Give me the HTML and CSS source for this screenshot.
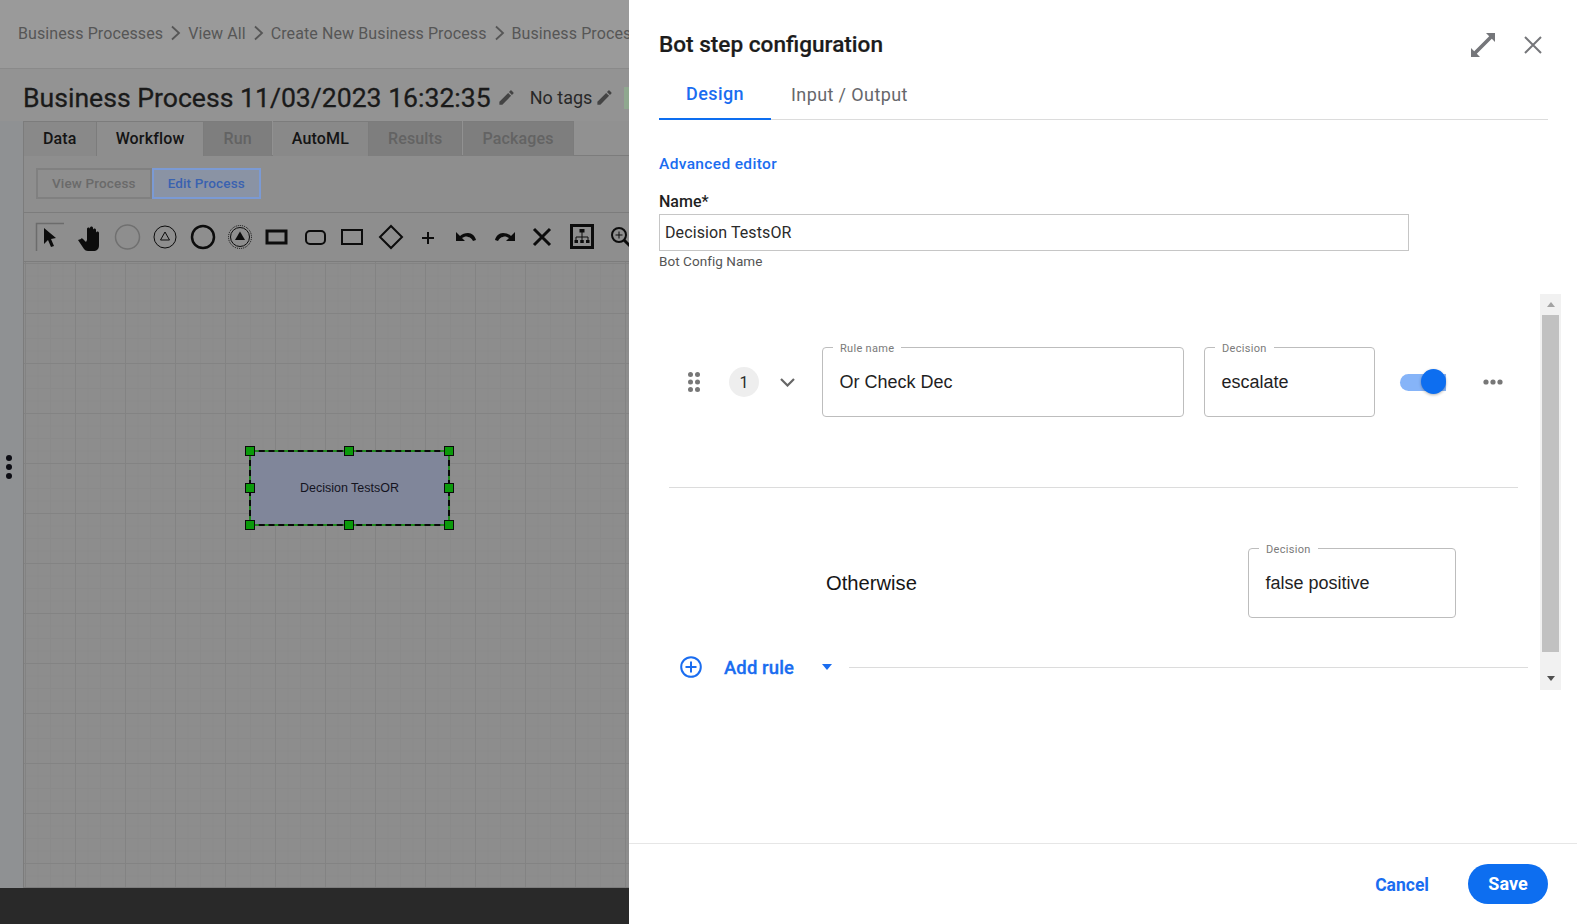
FILE: index.html
```html
<!DOCTYPE html>
<html>
<head>
    <meta charset="utf-8">
    <title>Bot step configuration</title>
    <link rel="stylesheet" href="styles.css">
</head>
<body>
    <div class="page">
        <!-- dimmed page behind the drawer -->
        <section class="backdrop">
            <nav class="crumbs">
                <span>Business Processes</span>
                <svg class="crumb-sep" viewBox="0 0 25 16"><path d="M9 1.500l7 6.500-7 6.500" /></svg>
                <span>View All</span>
                <svg class="crumb-sep" viewBox="0 0 25 16"><path d="M9 1.500l7 6.500-7 6.500" /></svg>
                <span>Create New Business Process</span>
                <svg class="crumb-sep" viewBox="0 0 25 16"><path d="M9 1.500l7 6.500-7 6.500" /></svg>
                <span class="crumb-last">Business Proces</span>
            </nav>
            <div class="process-title">
                <h1>Business Process 11/03/2023 16:32:35</h1>
                <svg class="pencil" viewBox="0 0 24 24"><path d="M3 17.250V21h3.750L17.810 9.940l-3.750-3.750L3 17.250zM20.710 7.040a1 1 0 0 0 0-1.410l-2.340-2.340a1 1 0 0 0-1.410 0l-1.830 1.830 3.750 3.750 1.830-1.830z" /></svg>
                <span class="tags">No tags</span>
                <svg class="pencil tags-pencil" viewBox="0 0 24 24"><path d="M3 17.250V21h3.750L17.810 9.940l-3.750-3.750L3 17.250zM20.710 7.040a1 1 0 0 0 0-1.410l-2.340-2.340a1 1 0 0 0-1.410 0l-1.830 1.830 3.750 3.750 1.830-1.830z" /></svg>
                <span class="status-chip"></span>
            </div>
            <div class="workspace">
                <div class="bg-tabs">
                    <div class="bg-tab">Data</div>
                    <div class="bg-tab current">Workflow</div>
                    <div class="bg-tab off">Run</div>
                    <div class="bg-tab">AutoML</div>
                    <div class="bg-tab off">Results</div>
                    <div class="bg-tab off">Packages</div>
                </div>
                <div class="mode-row">
                    <div class="mode-btn">View Process</div>
                    <div class="mode-btn active">Edit Process</div>
                </div>
                <div class="toolbar">
                    <svg viewBox="0 0 38 38"><path class="select-corner" d="M5.500 33V5.500H33" /><path class="solid" d="M13 10l0 16 4-4 3 7 3-1-3-7 5-1z" /></svg>
                    <svg viewBox="0 0 38 38"><path class="solid" d="M12 21l-3 1 6 9c1 1 2 2 4 2h5c4 0 6-2 6-6V15c0-2-3-2-3 0v-3c0-2-3-2-3 0v-2c0-2-3-2-3 0v1c0-2-3-2-3 0v11l-1 2-3-3c-1-1-2-1-2 0z" /></svg>
                    <svg viewBox="0 0 38 38"><circle class="line-grey" cx="20.500" cy="19" r="12" /></svg>
                    <svg viewBox="0 0 38 38"><circle class="line" cx="20" cy="19" r="11" /><path class="line" d="M20 14l4.500 8h-9z" /></svg>
                    <svg viewBox="0 0 38 38"><circle class="line-25" cx="20" cy="19" r="11" /></svg>
                    <svg viewBox="0 0 38 38"><circle class="line-dbl" cx="19" cy="19" r="11.500" /><circle class="line" cx="19" cy="19" r="9.500" /><path class="solid" d="M19 13.500l5 8.500H14z" /></svg>
                    <svg viewBox="0 0 38 38"><rect class="line-3" x="8" y="13" width="19" height="12" /></svg>
                    <svg viewBox="0 0 38 38"><rect class="line-2" x="9" y="13" width="19" height="13" rx="4" /></svg>
                    <svg viewBox="0 0 38 38"><rect class="line-2" x="7" y="12" width="20" height="14" /></svg>
                    <svg viewBox="0 0 38 38"><path class="line-2" d="M18 8l11 11-11 11L7 19z" /></svg>
                    <svg viewBox="0 0 38 38"><path class="line-2" d="M17 14v12M11 20h12" /></svg>
                    <svg viewBox="0 0 38 38"><path class="solid" d="M7 14v9h9l-3-3c2-1 4-2 6-1 2 0 4 2 5 4l3-1c-1-4-4-7-8-7-3 0-6 1-8 3z" /></svg>
                    <svg viewBox="0 0 38 38"><path class="solid" d="M28 14v9h-9l3-3c-2-1-4-2-6-1-2 0-4 2-5 4l-3-1c1-4 4-7 8-7 3 0 6 1 8 3z" /></svg>
                    <svg viewBox="0 0 38 38"><path class="line-3" d="M9 11l16 16M25 11L9 27" /></svg>
                    <svg viewBox="0 0 38 38"><rect class="line-3" x="8.500" y="7.500" width="21" height="22" /><path class="line" d="M19 14v8M13 22v-3h12v3" /><path class="solid" d="M16.500 11h5v3.500h-5zM11.500 22H15v3h-3.500zM17.250 22h3.500v3h-3.500zM23 22h3.500v3H23z" /></svg>
                    <svg viewBox="0 0 38 38"><circle class="line-2" cx="18" cy="17" r="7" /><path class="line-3" d="M23 22l8 8" /><path class="line" d="M18 13.500v7M14.500 17h7" /></svg>
                </div>
                <div class="canvas">
                    <div class="node">
                        <span>Decision TestsOR</span>
                        <i class="grip tl"></i><i class="grip tc"></i><i class="grip tr"></i>
                        <i class="grip ml"></i><i class="grip mr"></i>
                        <i class="grip bl"></i><i class="grip bc"></i><i class="grip br"></i>
                    </div>
                </div>
            </div>
            <div class="collapse-dots"><i></i><i></i><i></i></div>
            <div class="bottom-bar"></div>
        </section>

        <!-- drawer -->
        <aside class="drawer">
            <header class="drawer-head">
                <h2>Bot step configuration</h2>
                <div class="head-icons">
                    <svg class="expand" viewBox="0 0 24 24"><path d="M15 0h9v9l-3.200-3.200L5.800 20.800 9 24H0v-9l3.200 3.200L18.200 3.200z" /></svg>
                    <svg class="close" viewBox="0 0 18 18"><path d="M1 1l16 16M17 1L1 17" /></svg>
                </div>
            </header>
            <div class="drawer-tabs">
                <div class="drawer-tab active">Design</div>
                <div class="drawer-tab">Input / Output</div>
            </div>
            <a class="adv-link">Advanced editor</a>
            <label class="name-label">Name*</label>
            <div class="name-input">Decision TestsOR</div>
            <div class="name-hint">Bot Config Name</div>

            <div class="rules-scroll">
                <div class="rules">
                    <div class="rule-row">
                        <svg class="drag" viewBox="0 0 12 20">
                            <circle cx="2.500" cy="2.500" r="2.500" /><circle cx="9.500" cy="2.500" r="2.500" />
                            <circle cx="2.500" cy="10" r="2.500" /><circle cx="9.500" cy="10" r="2.500" />
                            <circle cx="2.500" cy="17.500" r="2.500" /><circle cx="9.500" cy="17.500" r="2.500" />
                        </svg>
                        <div class="rule-num">1</div>
                        <svg class="rule-chevron" viewBox="0 0 15 9"><path d="M1 1l6.500 6.500L14 1" /></svg>
                        <div class="field rule-name">
                            <span class="field-label">Rule name</span>
                            <span class="field-value">Or Check Dec</span>
                        </div>
                        <div class="field decision">
                            <span class="field-label">Decision</span>
                            <span class="field-value">escalate</span>
                        </div>
                        <div class="toggle"><i></i></div>
                        <svg class="more" viewBox="0 0 20 6">
                            <circle cx="3" cy="3" r="2.600" /><circle cx="10" cy="3" r="2.600" /><circle cx="17" cy="3" r="2.600" />
                        </svg>
                    </div>
                    <div class="rule-sep"></div>
                    <div class="otherwise-row">
                        <div class="otherwise-label">Otherwise</div>
                        <div class="field fallback">
                            <span class="field-label">Decision</span>
                            <span class="field-value">false positive</span>
                        </div>
                    </div>
                    <div class="add-row">
                        <svg class="add-icon" viewBox="0 0 22 22"><circle cx="11" cy="11" r="9.800" /><path d="M11 5.500v11M5.500 11h11" /></svg>
                        <span class="add-text">Add rule</span>
                        <span class="add-caret"></span>
                        <span class="add-line"></span>
                    </div>
                </div>
                <div class="scrollbar">
                    <span class="arrow-up"></span>
                    <div class="thumb"></div>
                    <span class="arrow-down"></span>
                </div>
            </div>

            <footer class="drawer-foot">
                <button class="btn-cancel">Cancel</button>
                <button class="btn-save">Save</button>
            </footer>
        </aside>
    </div>
</body>
</html>
```

FILE: styles.css
```css
* {
    box-sizing: border-box;
}
html, body {
    margin: 0;
    padding: 0;
    height: 100%;
    overflow: hidden;
}
body {
    font-family: Roboto, "Liberation Sans", sans-serif;
    background-color: #fff;
}
.page {
    display: grid;
    grid-template-columns: 629px 948px;
    height: 924px;
}

/* backdrop */
.backdrop {
    position: relative;
    display: flex;
    flex-direction: column;
    min-width: 0;
    overflow: hidden;
    background-color: #8f9193;
}
.crumbs {
    display: flex;
    align-items: center;
    flex: none;
    height: 69px;
    padding: 0 0 2px 18px;
    overflow: hidden;
    font-size: 16px;
    letter-spacing: 0.1px;
    color: #565656;
    white-space: nowrap;
    background-color: #9a9a9a;
    border-bottom: 1px solid #8a8a8a;
}
.crumb-last {
    flex: 1;
    min-width: 0;
}
.crumb-sep {
    flex: none;
    width: 25px;
    height: 16px;
}
.crumb-sep path {
    fill: none;
    stroke: #565656;
    stroke-width: 1.8;
}
.process-title {
    display: flex;
    align-items: center;
    flex: none;
    height: 52px;
    padding: 5px 0 0 23px;
    white-space: nowrap;
    background-color: #939393;
}
.process-title h1 {
    margin: 0;
    font-size: 26.600px;
    font-weight: 400;
    color: #1a1a1a;
    -webkit-text-stroke: 0.3px #1a1a1a;
}
.pencil {
    flex: none;
    width: 19px;
    height: 19px;
    margin-left: 6px;
    fill: #444;
}
.tags-pencil {
    margin-left: 3px;
}
.tags {
    margin-left: 14px;
    font-size: 18px;
    color: #282828;
}
.status-chip {
    flex: none;
    width: 10px;
    height: 22px;
    margin-left: 10px;
    background-color: #8fa88f;
}

.workspace {
    display: flex;
    flex-direction: column;
    flex: 1;
    min-height: 0;
    margin-left: 23px;
    border-left: 1px solid #7c7c7c;
    background-color: #8e8e8e;
}
.bg-tabs {
    display: flex;
    flex: none;
    height: 35px;
    background-color: #919191;
    border-bottom: 1px solid #7c7c7c;
}
.bg-tab {
    display: flex;
    align-items: center;
    margin-bottom: -1px;
    padding: 0 19px 2px;
    font-size: 16px;
    font-weight: 500;
    letter-spacing: 0.15px;
    color: #141414;
    background-color: #898989;
    border-top: 1px solid #7c7c7c;
    border-right: 1px solid #7c7c7c;
}
.bg-tab.current {
    background-color: #8e8e8e;
}
.bg-tab.off {
    margin-right: 1px;
    color: #636363;
    background-color: #7e7e7e;
}
.mode-row {
    display: flex;
    flex: none;
    height: 57px;
    padding: 12px 0 0 12px;
    border-bottom: 1px solid #7c7c7c;
}
.mode-btn {
    display: flex;
    align-items: center;
    justify-content: center;
    height: 31px;
    padding: 0 14px 2px;
    font-size: 13.500px;
    font-weight: 500;
    letter-spacing: 0.15px;
    color: #6a6a6a;
    background-color: #8e8e8e;
    border: 2px solid #808080;
}
.mode-btn.active {
    color: #3a62b0;
    background-color: #8a93a4;
    border: 2px solid #7b9ad4;
}
.toolbar {
    display: flex;
    align-items: center;
    flex: none;
    height: 49px;
    padding-left: 7px;
    border-bottom: 1px solid #7c7c7c;
}
.toolbar svg {
    flex: none;
    width: 38px;
    height: 38px;
    fill: none;
    stroke: #0c0c0c;
    stroke-width: 1;
}
.toolbar .solid {
    fill: #0c0c0c;
    stroke: none;
}
.toolbar .select-corner {
    stroke: #6c6c6c;
    stroke-width: 1.5;
}
.toolbar .line-grey {
    stroke: #707070;
    stroke-width: 1.5;
}
.toolbar .line-2 {
    stroke-width: 2;
}
.toolbar .line-25 {
    stroke-width: 2.500;
}
.toolbar .line-3 {
    stroke-width: 3;
}
.toolbar .line-dbl {
    stroke-width: 1;
    stroke-dasharray: 1 1;
}
.canvas {
    position: relative;
    flex: 1;
    min-height: 0;
    background-color: #8d8d8d;
    background-image:
        linear-gradient(#838383 1px, transparent 1px),
        linear-gradient(90deg, #838383 1px, transparent 1px),
        linear-gradient(#8a8a8a 1px, transparent 1px),
        linear-gradient(90deg, #8a8a8a 1px, transparent 1px);
    background-size: 50px 50px, 50px 50px, 12.500px 12.500px, 12.500px 12.500px;
    background-position: 1px 1px;
    border-bottom: 1px solid #7c7c7c;
}
/* node sits on the free canvas */
.node {
    position: absolute;
    left: 225px;
    top: 188px;
    display: flex;
    align-items: center;
    justify-content: center;
    width: 201px;
    height: 76px;
    font-family: "Liberation Sans", Arial, sans-serif;
    font-size: 12.500px;
    color: #14141f;
    background: linear-gradient(#80869a, #80869a) padding-box, #1f8a1f border-box;
    border: 2px dashed #0a0a0a;
}
.grip {
    position: absolute;
    width: 10px;
    height: 10px;
    background-color: #0a9a0a;
    border: 1px solid #0a0a0a;
}
.tl, .tc, .tr { top: -6px; }
.ml, .mr { top: 31px; }
.bl, .bc, .br { bottom: -6px; }
.tl, .ml, .bl { left: -6px; }
.tc, .bc { left: 93px; }
.tr, .mr, .br { right: -6px; }
.collapse-dots {
    position: absolute;
    left: 6px;
    top: 455px;
    display: flex;
    flex-direction: column;
    gap: 3px;
}
.collapse-dots i {
    width: 6px;
    height: 6px;
    border-radius: 50%;
    background-color: #0d0d14;
}
.bottom-bar {
    flex: none;
    height: 36px;
    background-color: #292929;
}

/* drawer */
.drawer {
    display: flex;
    flex-direction: column;
    height: 924px;
    background-color: #fff;
}
.drawer-head {
    display: flex;
    align-items: center;
    justify-content: space-between;
    flex: none;
    height: 32px;
    margin: 28px 29px 0 30px;
}
.drawer-head h2 {
    margin: 0;
    font-size: 22.600px;
    font-weight: 500;
    color: #1c1c1c;
    -webkit-text-stroke: 0.2px #1c1c1c;
}
.head-icons {
    display: flex;
    align-items: center;
    margin-right: 6px;
}
.expand {
    width: 24px;
    height: 24px;
    margin-top: 1px;
    fill: #75767a;
}
.close {
    width: 18px;
    height: 18px;
    margin: 2px 0 0 29px;
    fill: none;
    stroke: #75767a;
    stroke-width: 2;
}
.drawer-tabs {
    display: flex;
    flex: none;
    height: 50px;
    margin: 10px 29px 0 30px;
    border-bottom: 1px solid #dcdcdc;
}
.drawer-tab {
    display: flex;
    align-items: center;
    height: 50px;
    padding: 0 20px 2px;
    font-size: 18px;
    letter-spacing: 0.4px;
    color: #66676b;
}
.drawer-tab.active {
    justify-content: center;
    width: 112px;
    padding: 0 0 1px;
    font-weight: 500;
    color: #1a6df0;
    border-bottom: 2px solid #0d6ef0;
}
.adv-link {
    flex: none;
    height: 20px;
    margin: 34px 0 0 30px;
    font-size: 15.500px;
    font-weight: 500;
    line-height: 20px;
    letter-spacing: 0.35px;
    color: #1a6df0;
}
.name-label {
    flex: none;
    height: 18px;
    margin: 19px 0 0 30px;
    font-size: 16px;
    font-weight: 500;
    line-height: 18px;
    color: #1f1f1f;
}
.name-input {
    display: flex;
    align-items: center;
    flex: none;
    width: 750px;
    height: 37px;
    margin: 3px 0 0 30px;
    padding-left: 5px;
    font-size: 16px;
    letter-spacing: 0.1px;
    color: #2a2a2a;
    border: 1px solid #c6c6c6;
}
.name-hint {
    flex: none;
    height: 16px;
    margin: 2px 0 0 30px;
    font-size: 13.500px;
    line-height: 16px;
    letter-spacing: 0.05px;
    color: #555;
}
.rules-scroll {
    display: flex;
    flex: none;
    height: 396px;
    margin: 25px 16px 0 30px;
}
.rules {
    flex: 1;
    min-width: 0;
    padding-top: 53px;
}
.rule-row {
    display: flex;
    align-items: center;
    height: 70px;
    padding-left: 29px;
}
.drag {
    flex: none;
    width: 12px;
    height: 20px;
    fill: #777;
}
.rule-num {
    display: flex;
    align-items: center;
    justify-content: center;
    flex: none;
    width: 30px;
    height: 30px;
    margin-left: 29px;
    font-size: 16px;
    color: #2a2a2a;
    background-color: #eee;
    border-radius: 50%;
}
.rule-chevron {
    flex: none;
    width: 15px;
    height: 9px;
    margin-left: 21px;
    fill: none;
    stroke: #666;
    stroke-width: 2.200;
}
.field {
    position: relative;
    display: flex;
    align-items: center;
    flex: none;
    height: 70px;
    padding-left: 16.500px;
    border: 1px solid #bdbdbd;
    border-radius: 4px;
}
.field-label {
    position: absolute;
    top: -6px;
    left: 10px;
    padding: 0 7px;
    font-size: 11px;
    line-height: 13px;
    letter-spacing: 0.3px;
    color: #7a7a7a;
    background-color: #fff;
}
.field-value {
    font-family: "Liberation Sans", Arial, sans-serif;
    font-size: 18px;
    color: #1f1f1f;
}
.rule-name {
    width: 362px;
    margin-left: 27px;
}
.decision {
    width: 171px;
    margin-left: 20px;
}
.toggle {
    position: relative;
    flex: none;
    width: 46px;
    height: 17px;
    margin-left: 25px;
    background-color: #86b4f8;
    border-radius: 9px 0 0 9px;
}
.toggle i {
    position: absolute;
    right: 0;
    top: -5px;
    width: 25px;
    height: 25px;
    border-radius: 50%;
    background-color: #0d6ef0;
    box-shadow: 0 1px 3px rgba(0, 0, 0, 0.3);
}
.more {
    flex: none;
    width: 20px;
    height: 6px;
    margin-left: 37px;
    fill: #777;
}
.rule-sep {
    width: 849px;
    height: 1px;
    margin: 70px 0 0 10px;
    background-color: #dcdcdc;
}
.otherwise-row {
    display: flex;
    align-items: center;
    margin-top: 60px;
    padding-left: 167px;
}
.otherwise-label {
    flex: none;
    width: 422px;
    font-family: "Liberation Sans", Arial, sans-serif;
    font-size: 20.200px;
    color: #161616;
}
.fallback {
    width: 208px;
}
.add-row {
    display: flex;
    align-items: center;
    height: 20px;
    margin-top: 39px;
    padding-left: 21px;
}
.add-icon {
    flex: none;
    width: 22px;
    height: 22px;
    fill: none;
    stroke: #1a6df0;
    stroke-width: 2;
}
.add-text {
    margin-left: 22px;
    padding-top: 2px;
    font-size: 18.500px;
    font-weight: 500;
    letter-spacing: 0.1px;
    color: #1a6df0;
    -webkit-text-stroke: 0.3px #1a6df0;
}
.add-caret {
    flex: none;
    width: 0;
    height: 0;
    margin: 0 0 0 28px;
    border-top: 6px solid #1a6df0;
    border-left: 5.500px solid transparent;
    border-right: 5.500px solid transparent;
}
.add-line {
    flex: none;
    width: 679px;
    height: 1px;
    margin-left: 17px;
    background-color: #dcdcdc;
}
.scrollbar {
    display: flex;
    flex-direction: column;
    align-items: center;
    flex: none;
    width: 21px;
    background-color: #f1f1f1;
}
.arrow-up, .arrow-down {
    display: flex;
    flex: none;
    width: 0;
    height: 0;
    border-left: 4.500px solid transparent;
    border-right: 4.500px solid transparent;
}
.arrow-up {
    margin: 8px 0;
    border-bottom: 5px solid #a3a3a3;
}
.arrow-down {
    margin: 24px 0 0;
    border-top: 5px solid #505050;
}
.thumb {
    flex: none;
    width: 17px;
    height: 337px;
    background-color: #c1c1c1;
}
.drawer-foot {
    display: flex;
    align-items: center;
    justify-content: flex-end;
    flex: none;
    height: 81px;
    margin-top: auto;
    padding-right: 29px;
    border-top: 1px solid #e6e6e6;
}
.btn-cancel {
    margin-right: 39px;
    padding: 2px 0 0;
    font-family: Roboto, sans-serif;
    font-size: 17.500px;
    font-weight: 700;
    color: #1a6df0;
    background: none;
    border: none;
}
.btn-save {
    width: 80px;
    height: 40px;
    padding: 0 0 2px;
    font-family: Roboto, sans-serif;
    font-size: 18px;
    font-weight: 700;
    color: #fff;
    background-color: #0d6ef0;
    border: none;
    border-radius: 20px;
}
```
